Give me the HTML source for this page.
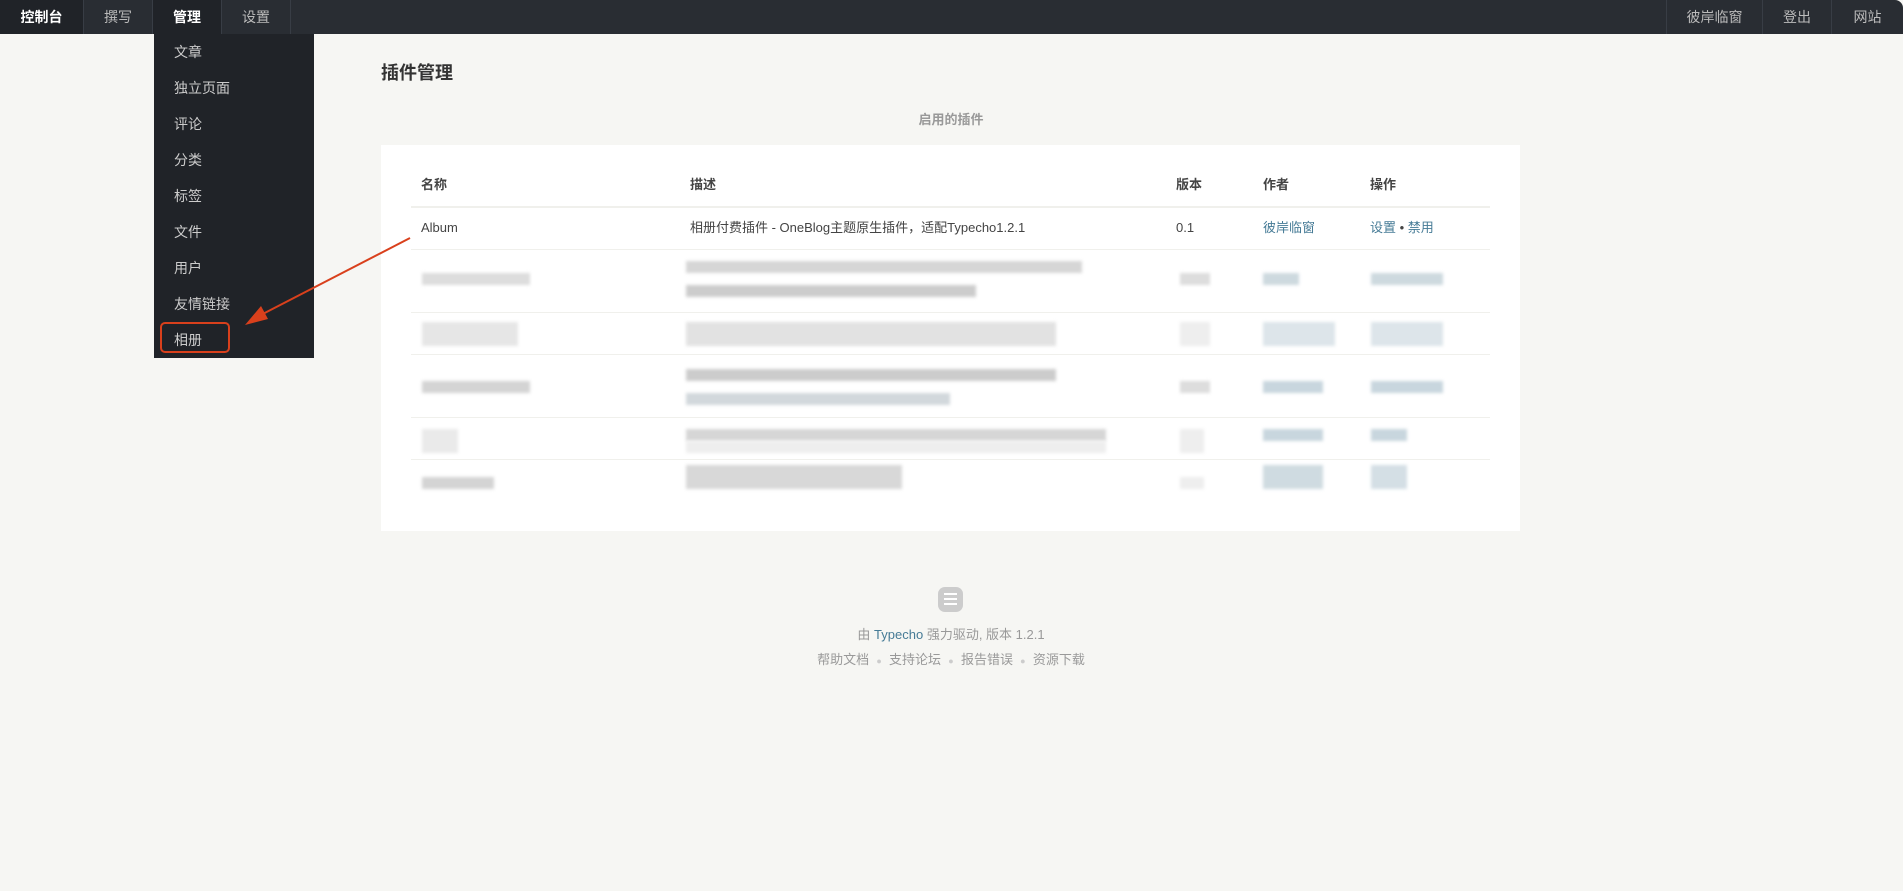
<!DOCTYPE html>
<html><head><meta charset="utf-8"><style>
*{margin:0;padding:0;box-sizing:border-box}
body{width:1903px;height:891px;background:#f6f6f3;font-family:"Liberation Sans","Noto Sans CJK SC",sans-serif;font-size:13px;color:#444;position:relative;overflow:hidden}
.nav{position:absolute;left:0;top:0;width:1903px;height:34px;background:#292d33;border-radius:8px 8px 0 0}
.nav a{position:absolute;top:0;height:34px;line-height:34px;text-align:center;color:#bbb;font-size:14px;border-right:1px solid #383d45}
.dd{position:absolute;left:154px;top:34px;width:160px;height:324px;background:#202328}
.dd div{position:absolute;left:20px;color:#ccc;font-size:14px;line-height:20px}
.box{position:absolute;left:381px;top:145px;width:1139px;height:386px;background:#fff}
.t{position:absolute;font-size:13px;line-height:20px}
.line{position:absolute;left:411px;width:1079px;height:1px;background:#f0f0ec}
.bl{position:absolute;background:#ddd;filter:blur(1.5px)}
.link{color:#467b96}
</style></head><body>
<div class="nav">
<a style="left:0;width:84px;color:#fff;font-weight:bold;background:#202328">控制台</a>
<a style="left:84px;width:69px">撰写</a>
<a style="left:153px;width:69px;color:#fff;font-weight:bold;background:#202328">管理</a>
<a style="left:222px;width:69px">设置</a>
<a style="left:1666px;width:97px;border-left:1px solid #383d45">彼岸临窗</a>
<a style="left:1763px;width:69px">登出</a>
<a style="left:1832px;width:71px;border-right:none">网站</a>
</div>
<div class="dd">
<div style="top:8px">文章</div><div style="top:44px">独立页面</div><div style="top:80px">评论</div><div style="top:116px">分类</div><div style="top:152px">标签</div><div style="top:188px">文件</div><div style="top:224px">用户</div><div style="top:260px">友情链接</div><div style="top:296px">相册</div>
</div>
<div style="position:absolute;left:160px;top:322px;width:70px;height:31px;border:2px solid #d9401c;border-radius:5px"></div>
<div class="t" style="left:381px;top:61px;font-size:18px;font-weight:bold;color:#333;line-height:24px">插件管理</div>
<div class="t" style="left:851px;width:200px;text-align:center;top:110px;color:#999;font-weight:bold;font-size:13px">启用的插件</div>
<div class="box"></div>
<svg style="position:absolute;left:0;top:0;z-index:5" width="500" height="400"><line x1="410" y1="238" x2="255" y2="318" stroke="#d9401c" stroke-width="2"/><polygon points="245,325 261,306 268,319" fill="#d9401c"/></svg>
<div class="t" style="left:421px;top:175px;font-weight:bold">名称</div>
<div class="t" style="left:690px;top:175px;font-weight:bold">描述</div>
<div class="t" style="left:1176px;top:175px;font-weight:bold">版本</div>
<div class="t" style="left:1263px;top:175px;font-weight:bold">作者</div>
<div class="t" style="left:1370px;top:175px;font-weight:bold">操作</div>
<div class="line" style="top:206px;height:2px"></div>
<div class="t" style="left:421px;top:218px">Album</div>
<div class="t" style="left:690px;top:218px">相册付费插件 - OneBlog主题原生插件，适配Typecho1.2.1</div>
<div class="t" style="left:1176px;top:218px">0.1</div>
<div class="t link" style="left:1263px;top:218px">彼岸临窗</div>
<div class="t" style="left:1370px;top:218px"><span class="link">设置</span> • <span class="link">禁用</span></div>
<div class="line" style="top:249px"></div><div class="line" style="top:312px"></div><div class="line" style="top:354px"></div><div class="line" style="top:417px"></div><div class="line" style="top:459px"></div>
<div class="bl" style="left:422px;top:273px;width:108px;height:12px"></div>
<div class="bl" style="left:686px;top:261px;width:396px;height:12px;background:#d6d6d6"></div>
<div class="bl" style="left:686px;top:285px;width:290px;height:12px;background:#ccc"></div>
<div class="bl" style="left:1180px;top:273px;width:30px;height:12px"></div>
<div class="bl" style="left:1263px;top:273px;width:36px;height:12px;background:#cdd9df"></div>
<div class="bl" style="left:1371px;top:273px;width:72px;height:12px;background:#cdd9df"></div>
<div class="bl" style="left:422px;top:322px;width:96px;height:24px;background:#e6e6e6"></div>
<div class="bl" style="left:686px;top:322px;width:370px;height:24px;background:#e2e2e2"></div>
<div class="bl" style="left:1180px;top:322px;width:30px;height:24px;background:#eee"></div>
<div class="bl" style="left:1263px;top:322px;width:72px;height:24px;background:#dde5ea"></div>
<div class="bl" style="left:1371px;top:322px;width:72px;height:24px;background:#dde5ea"></div>
<div class="bl" style="left:422px;top:381px;width:108px;height:12px;background:#d4d4d4"></div>
<div class="bl" style="left:686px;top:369px;width:370px;height:12px;background:#ccc"></div>
<div class="bl" style="left:686px;top:393px;width:264px;height:12px;background:#d2d8dc"></div>
<div class="bl" style="left:1180px;top:381px;width:30px;height:12px"></div>
<div class="bl" style="left:1263px;top:381px;width:60px;height:12px;background:#c8d6de"></div>
<div class="bl" style="left:1371px;top:381px;width:72px;height:12px;background:#c8d6de"></div>
<div class="bl" style="left:422px;top:429px;width:36px;height:24px;background:#eaeaea"></div>
<div class="bl" style="left:686px;top:429px;width:420px;height:12px;background:#d6d6d6"></div>
<div class="bl" style="left:686px;top:441px;width:420px;height:12px;background:#eee"></div>
<div class="bl" style="left:1180px;top:429px;width:24px;height:24px;background:#eee"></div>
<div class="bl" style="left:1263px;top:429px;width:60px;height:12px;background:#c8d6de"></div>
<div class="bl" style="left:1371px;top:429px;width:36px;height:12px;background:#c8d6de"></div>
<div class="bl" style="left:422px;top:477px;width:72px;height:12px;background:#d4d4d4"></div>
<div class="bl" style="left:686px;top:465px;width:216px;height:24px;background:#d8d8d8"></div>
<div class="bl" style="left:1180px;top:477px;width:24px;height:12px;background:#eee"></div>
<div class="bl" style="left:1263px;top:465px;width:60px;height:24px;background:#cfdbe1"></div>
<div class="bl" style="left:1371px;top:465px;width:36px;height:24px;background:#d4dfe5"></div>
<div style="position:absolute;left:938px;top:587px;width:25px;height:25px;border-radius:7px;background:#ccc"></div>
<div style="position:absolute;left:944px;top:593px;width:13px;height:2px;background:#fff;box-shadow:0 5px 0 #fff,0 10px 0 #fff"></div>
<div class="t" style="left:651px;width:600px;text-align:center;top:625px;color:#999;font-size:13px">由 <span class="link">Typecho</span> 强力驱动, 版本 1.2.1</div>
<div class="t" style="left:651px;width:600px;text-align:center;top:650px;color:#999;font-size:13px">帮助文档 &nbsp;<span style="color:#ccc;font-size:9px">●</span>&nbsp; 支持论坛 &nbsp;<span style="color:#ccc;font-size:9px">●</span>&nbsp; 报告错误 &nbsp;<span style="color:#ccc;font-size:9px">●</span>&nbsp; 资源下载</div>
</body></html>
